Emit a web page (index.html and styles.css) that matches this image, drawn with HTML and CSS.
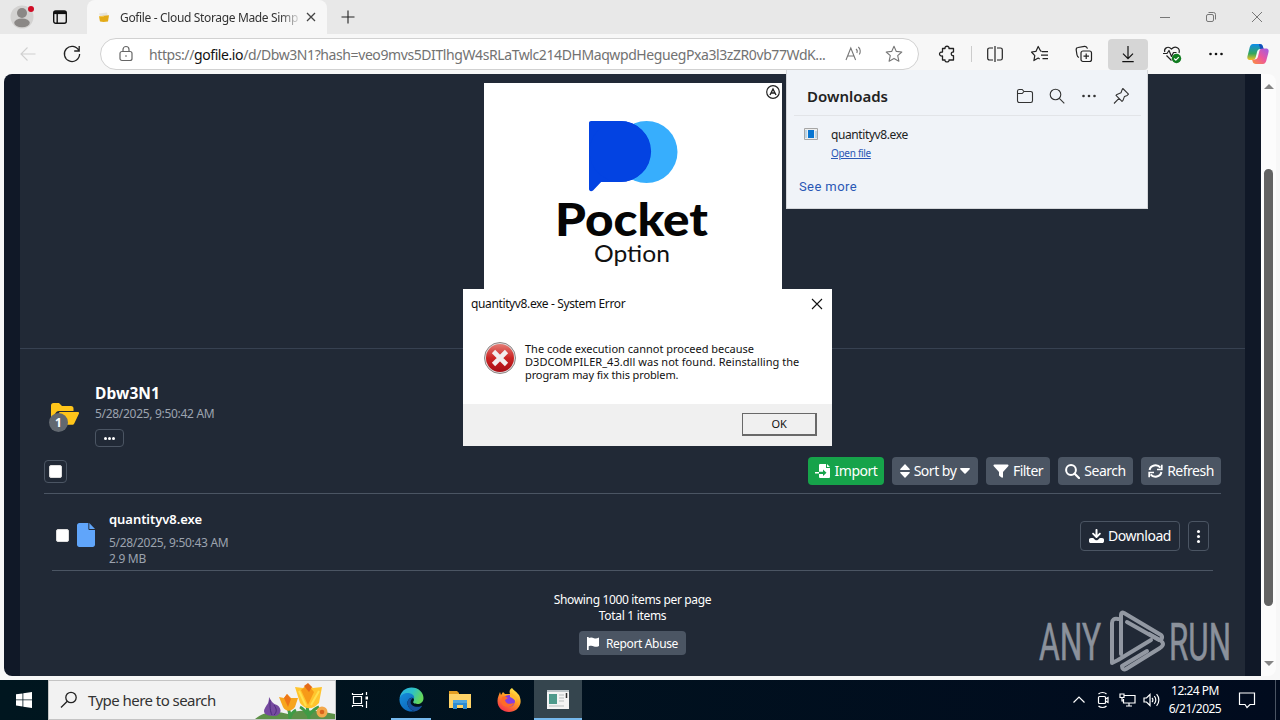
FILE: index.html
```html
<!DOCTYPE html>
<html lang="en">
<head>
    <meta charset="UTF-8">
    <title>Gofile - Cloud Storage Made Simple</title>
    <link rel="stylesheet" href="styles.css">
</head>
<body>
<div class="desktop">
    <div class="tab-strip">
        <div class="profile">
            <svg width="24" height="24" viewBox="0 0 24 24"><circle cx="12" cy="12" r="11.5" fill="#d3d2d1"/><circle cx="12" cy="8" r="5" fill="#8b8886"/><ellipse cx="12" cy="17.8" rx="7.8" ry="4.4" fill="#8b8886"/></svg>
            <span class="profile-dot"></span>
        </div>
        <div class="tab-actions">
            <svg width="16" height="16" viewBox="0 0 16 16" fill="none" stroke="#111" stroke-width="1.4"><rect x="1.7" y="2" width="12.6" height="12.3" rx="2"/><path d="M2 3.6h12" stroke-width="3"/><path d="M5.2 4v10"/></svg>
        </div>
        <div class="tab">
            <svg class="favicon" width="14" height="14" viewBox="0 0 14 14"><path d="M2 3.5l8-1 1 4H3z" fill="#e6e4dd"/><path d="M2 6.2l10-1-1 6.3c-3 .6-6 .6-8 0z" fill="#e3ab19"/><path d="M2 6.4l5-.6v1l-5 .5z" fill="#f6ca51"/></svg>
            <span class="tab-title">Gofile - Cloud Storage Made Simp</span>
            <svg width="16" height="16" viewBox="0 0 16 16" stroke="#444" stroke-width="1.3"><path d="M4 4l8 8M12 4l-8 8"/></svg>
        </div>
        <svg class="new-tab" width="16" height="16" viewBox="0 0 16 16" stroke="#222" stroke-width="1.1"><path d="M8 1.500v13M1.500 8h13"/></svg>
        <div class="window-buttons">
            <svg width="46" height="34" viewBox="0 0 46 34" stroke="#777" fill="none"><path d="M18 17.500h10"/></svg>
            <svg width="46" height="34" viewBox="0 0 46 34" stroke="#777" fill="none"><rect x="18.500" y="14.500" width="7" height="7" rx="1.500"/><path d="M20.500 12.500h5a2 2 0 0 1 2 2v5"/></svg>
            <svg width="46" height="34" viewBox="0 0 46 34" stroke="#777" fill="none"><path d="M18 12l10 10M28 12l-10 10"/></svg>
        </div>
    </div>

    <div class="toolbar">
        <div class="tool"><svg width="20" height="20" viewBox="0 0 20 20" fill="none" stroke="#d0d0d0" stroke-width="1.1"><path d="M17.500 10H3M9.500 3.500L3 10l6.500 6.500"/></svg></div>
        <div class="tool"><svg width="20" height="20" viewBox="0 0 20 20" fill="none" stroke="#222" stroke-width="1.3"><path d="M16.800 6.500A7.600 7.600 0 1 0 17.600 10M17.200 2v5h-5"/></svg></div>
        <div class="address-bar">
            <svg class="lock" width="18" height="18" viewBox="0 0 18 18" fill="none" stroke="#666" stroke-width="1.2"><rect x="3" y="6.500" width="12" height="9" rx="2"/><path d="M6 6.500V4.500a3 3 0 0 1 6 0v2"/><circle cx="9" cy="11" r=".8" fill="#555" stroke="none"/></svg>
            <span class="url">https://<b>gofile.io</b>/d/Dbw3N1?hash=veo9mvs5DITlhgW4sRLaTwlc214DHMaqwpdHeguegPxa3l3zZR0vb77WdK...</span>
            <svg class="read-aloud" width="20" height="20" viewBox="0 0 20 20" fill="none" stroke="#777" stroke-width="1.1"><path d="M2 16L6.800 4l4.800 12M3.600 12h6.400M12 5c1.300 1 1.300 3 .8 4M14.300 3c2.400 2 2.400 5.500 1 7.500"/></svg>
            <svg width="20" height="20" viewBox="0 0 20 20" fill="none" stroke="#777" stroke-width="1.100" stroke-linejoin="round"><path d="M10 2.300l2.300 5.100 5.500.6-4.100 3.700 1.200 5.500L10 14.400l-4.900 2.800 1.200-5.500L2.200 8l5.500-.6z"/></svg>
        </div>
        <div class="tool puzzle"><svg width="20" height="20" viewBox="0 0 20 20" fill="none" stroke="#222" stroke-width="1.300" stroke-linejoin="round"><path d="M5.500 4.500H8c-.5-3 4.500-3 4 0h4.500V8c-3-.4-3 4 0 3.600V16H12c.5 2.500-4.500 2.500-4 0H5.500v-4c-4 .5-4-4.400 0-4z"/></svg></div>
        <div class="tool-divider"></div>
        <div class="tool"><svg width="20" height="20" viewBox="0 0 20 20" fill="none" stroke="#222" stroke-width="1.200"><path d="M8 4H4.500A1.800 1.800 0 0 0 2.700 5.800v8.400A1.800 1.800 0 0 0 4.500 16H8M12 4h3.500a1.800 1.800 0 0 1 1.800 1.800v8.400a1.800 1.800 0 0 1-1.800 1.800H12M10 2v16"/></svg></div>
        <div class="tool fav"><svg width="20" height="20" viewBox="0 0 20 20" fill="none" stroke="#222" stroke-width="1.200" stroke-linejoin="round"><path d="M11.800 7.400L10.600 7 8.200 2.500 5.900 7.400 1.500 8l3.300 3.600-.9 5L8.200 14l1.500.9M12 7.700h6M11 11.200h7M12.500 14.700H18"/></svg></div>
        <div class="tool"><svg width="20" height="20" viewBox="0 0 20 20" fill="none" stroke="#222" stroke-width="1.200"><rect x="7" y="7" width="10.500" height="10.500" rx="2"/><path d="M12.200 9.500v5.500M9.500 12.200H15M5 13.500C3.500 13 3.200 12 3 11L2.200 6C2 4.500 2.600 3.700 4 3.500l6.500-1.100c1.600-.2 2.500.6 3 2.200"/></svg></div>
        <div class="tool active"><svg width="20" height="20" viewBox="0 0 20 20" fill="none" stroke="#111" stroke-width="1.200"><path d="M10 2v12.500M5 9.700l5 5 5-5M4.300 17.700h11.400"/></svg></div>
        <div class="tool"><svg width="20" height="20" viewBox="0 0 20 20" fill="none" stroke="#222" stroke-width="1.200" stroke-linejoin="round"><path d="M2.800 8C1.600 5 5.500 1 9.500 5c4-4 9-.4 7.500 4M4.500 11.500l5 5M1 9.500h4l2-3 2.500 6 2-4h3"/><circle cx="14.500" cy="14.500" r="4.700" fill="#107c20" stroke="none"/><path d="M12.200 14.500l1.600 1.600 3-3" stroke="#fff"/></svg></div>
        <div class="tool"><svg width="20" height="20" viewBox="0 0 20 20" fill="#111"><circle cx="4.500" cy="10" r="1.300"/><circle cx="10" cy="10" r="1.300"/><circle cx="15.500" cy="10" r="1.300"/></svg></div>
        <div class="copilot"><svg width="24" height="24" viewBox="0 0 24 24">
            <defs>
                <linearGradient id="cp1" x1="0" y1="0" x2="0" y2="1"><stop offset="0" stop-color="#0b8cec"/><stop offset=".6" stop-color="#36a65c"/><stop offset="1" stop-color="#f7c324"/></linearGradient>
                <linearGradient id="cp2" x1="1" y1="0" x2="0" y2="1"><stop offset="0" stop-color="#9b5de8"/><stop offset=".5" stop-color="#ed579b"/><stop offset="1" stop-color="#fb913a"/></linearGradient>
            </defs>
            <path d="M7 2h7c2 0 2.500 1 3 3l.5 2h-3c-2 0-3 1-3.500 3l-1.200 5c-.5 2-1.500 3-3.500 3H4c-3 0-3-2.500-2.200-5l2-8C4.500 3 5.500 2 7 2z" fill="url(#cp1)"/>
            <path d="M13 2c2.500 0 3.500 1 4 3l.7 2.200h-3.200L13 3z" fill="#154fb9"/>
            <path d="M17 22h-7c-2 0-3-.8-3.500-3L6 17.500h2.500c2 0 3-1 3.500-3l1.200-5c.5-2 1.500-3 3.500-3H20c3 0 3 2.500 2.200 5l-2 7.500c-.7 2-1.700 3-3.200 3z" fill="url(#cp2)"/>
        </svg></div>
    </div>

    <div class="viewport">
        <div class="page">
            <div class="main">
                <div class="ad-area">
                    <div class="ad">
                        <svg width="298" height="206" viewBox="0 0 298 206">
                            <circle cx="162.500" cy="69" r="31" fill="#37aefd"/>
                            <path d="M107 38h29a30.500 30.500 0 0 1 0 61h-19l-8 8.500c-2 1.500-4 .500-4-1.500V40c0-1.200.8-2 2-2z" transform="translate(105 0) scale(1.01 1) translate(-105 0)" fill="#0343e2"/>
                            <circle cx="136" cy="68.500" r="30.500" fill="#0343e2"/>
                            <text class="ad-name" x="71" y="153" textLength="153" lengthAdjust="spacingAndGlyphs">Pocket</text>
                            <text class="ad-sub" x="110" y="179" textLength="76" lengthAdjust="spacingAndGlyphs">Option</text>
                            <circle cx="289" cy="9" r="6.300" fill="#fff" stroke="#222" stroke-width="1.200"/>
                            <path d="M286 12l3-6 3 6M287 10h4" fill="none" stroke="#222" stroke-width="1.400"/>
                        </svg>
                    </div>
                </div>

                <div class="file-manager">
                    <div class="folder-header">
                        <div class="folder-icon">
                            <svg width="28" height="22" viewBox="0 0 28 22" fill="#ffc51a"><path d="M2.500 0H8l3 3h9a2.500 2.500 0 0 1 2.500 2.500V8H8C6 8 5 9 4 11l-4 7V2.500A2.500 2.500 0 0 1 2.500 0z"/><path d="M8.500 9H27c1 0 1.300.8 1 1.500L23.500 20c-.5 1.300-1.300 1.800-2.500 1.800H2.500z"/></svg>
                            <span class="count-badge">1</span>
                        </div>
                        <div class="folder-info">
                            <div class="folder-name">Dbw3N1</div>
                            <div class="folder-date">5/28/2025, 9:50:42 AM</div>
                            <div class="more-button"><i></i><i></i><i></i></div>
                        </div>
                    </div>

                    <div class="actions">
                        <div class="select-all"><span class="checkbox"></span></div>
                        <div class="button import">
                            <svg width="16" height="14" viewBox="0 0 16 14"><path d="M5.500 0H11v4h4v8.700c0 .8-.5 1.300-1.300 1.300H5.300C4.500 14 4 13.500 4 12.700V10h4v2l3.500-3.200L8 5.500v2.200H4V1.300C4 .5 4.500 0 5.500 0zM12 0l3 3h-3zM0 8h4v1.500H0z"/></svg>
                            <span>Import</span>
                        </div>
                        <div class="button sort">
                            <svg width="10" height="14" viewBox="0 0 10 14"><path d="M5 0l4.700 5c.3.500 0 1-.6 1H.9C.3 6 0 5.500.3 5zM5 14L.3 9c-.3-.5 0-1 .6-1h8.200c.6 0 .9.500.6 1z"/></svg>
                            <span>Sort by</span>
                            <svg width="10" height="6" viewBox="0 0 10 6"><path d="M1 0h8c.9 0 1.200.8.7 1.300L5.600 5.500c-.4.400-.8.400-1.200 0L.3 1.300C-.2.800.1 0 1 0z"/></svg>
                        </div>
                        <div class="button filter">
                            <svg width="16" height="14" viewBox="0 0 16 14"><path d="M1.500.5h13c1 0 1.300 1 .7 1.700L10 8v5c0 .8-.7 1-1.300.6L6.500 12c-.4-.3-.5-.5-.5-1V8L.8 2.200C.2 1.500.5.500 1.500.5z"/></svg>
                            <span>Filter</span>
                        </div>
                        <div class="button search">
                            <svg width="15" height="15" viewBox="0 0 15 15"><circle cx="6" cy="6" r="4.900" fill="none" stroke="#fff" stroke-width="2"/><path d="M9.500 9.500L14 14" stroke="#fff" stroke-width="2.200" stroke-linecap="round"/></svg>
                            <span>Search</span>
                        </div>
                        <div class="button refresh">
                            <svg width="15" height="14" viewBox="0 0 15 14" fill="none" stroke="#fff" stroke-width="2"><path d="M1.600 6a6 5.500 0 0 1 10.800-2.300M13.400 8A6 5.500 0 0 1 2.600 10.300"/><path d="M13.800.8v4.700H9M1.200 13.200V8.500H6" stroke-width="1.700"/></svg>
                            <span>Refresh</span>
                        </div>
                    </div>

                    <div class="file-row">
                        <span class="checkbox"></span>
                        <svg class="file-icon" width="18" height="24" viewBox="0 0 19 24" preserveAspectRatio="none" fill="#60a5fa"><path d="M2.500 0H12v5.500c0 1 .5 1.500 1.500 1.500H19v14.500c0 1.500-1 2.500-2.500 2.500h-14C1 24 0 23 0 21.500v-19C0 1 1 0 2.500 0z"/><path d="M13 0l6 6h-6z"/></svg>
                        <div class="file-info">
                            <div class="file-name">quantityv8.exe</div>
                            <div class="file-meta">5/28/2025, 9:50:43 AM</div>
                            <div class="file-meta">2.9 MB</div>
                        </div>
                        <div class="outline-button download">
                            <svg width="15" height="14" viewBox="0 0 15 14"><path d="M6.500 1c0-1.300 2-1.300 2 0v4.800L10.300 4c1-.8 2 .3 1.300 1.300L8.200 8.700c-.4.400-1 .4-1.400 0L3.400 5.300C2.600 4.300 3.700 3.200 4.700 4l1.800 1.800z"/><path d="M2 9h2.200l1.800 1.700c1 .8 2 .8 3 0L10.800 9H13c1.200 0 2 .8 2 1.700v1.500c0 1-.8 1.800-1.800 1.800H1.800C.8 14 0 13.200 0 12.200v-1.500C0 9.800.8 9 2 9z"/></svg>
                            <span>Download</span>
                        </div>
                        <div class="outline-button kebab"><i></i><i></i><i></i></div>
                    </div>

                    <div class="summary">
                        <div class="per-page">Showing 1000 items per page</div>
                        <div class="total">Total 1 items</div>
                        <div class="report">
                            <svg width="12" height="13" viewBox="0 0 12 13" fill="#fff"><path d="M0 0h1.700v1C4 0 5.500.5 7 1.200c1.500.5 3 .3 5-.6V9C10 10 8.500 10 7 9.500 5.500 8.800 4 8.500 1.700 9.300V13H0z"/></svg>
                            <span>Report Abuse</span>
                        </div>
                    </div>
                </div>
            </div>
        </div>
        <div class="scrollbar">
            <span class="arrow-up"></span>
            <span class="thumb"></span>
            <span class="arrow-down"></span>
        </div>
    </div>

    <div class="taskbar">
        <div class="start"><svg width="16" height="16" viewBox="0 0 16 16" fill="#fff"><path d="M0 2.300l6.500-.9v6.100H0zM7.300 1.300L16 0v7.500H7.300zM0 8.300h6.500v6.200L0 13.600zM7.300 8.300H16V16l-8.700-1.300z"/></svg></div>
        <div class="search-field">
            <svg width="18" height="18" viewBox="0 0 18 18" fill="none" stroke="#222" stroke-width="1.300"><circle cx="11" cy="6.500" r="5.200"/><path d="M7.300 10.200L1 16.500"/></svg>
            <span>Type here to search</span>
            <svg class="flowers" width="80" height="38" viewBox="0 0 80 38">
                <path d="M0 38c8-7 20-9 33-5 12-5 25-4 47 0v5z" fill="#5d9148"/>
                <path d="M19 35c-8 0-12-3-9-8 2-4 4-4 4-11 3 5 4 7 8 8 6 4 4 11-3 11z" fill="#764aa0"/>
                <path d="M15 19c0 7 0 11 2 15M19 24c3 4 3 7 0 10" stroke="#4c2b7c" fill="none"/>
                <path d="M35 38c0-6-1-9-2-12M35 36c2-4 4-6 6-7M54 38c-1-8-2-10-2-16M54 34c4-5 7-7 10-8M53 34c-3-5-6-7-8-8" stroke="#3f9b45" stroke-width="3" fill="none"/>
                <path d="M24 16l5 1 3-4 4 4 7 0-3 9c-4 5-9 5-12 0z" fill="#f7a51e"/>
                <path d="M29 17l3-4 4 5-3 8z" fill="#ee7519"/>
                <path d="M40 6l8 1 5-4 5 4 9-1-3 16c-6 7-14 7-19 0z" fill="#ffc42d"/>
                <path d="M46 9l7-5 6 7-6 13z" fill="#f79a18"/><path d="M49 5l4-3 4 4-3 5z" fill="#e56b19"/>
                <path d="M44 10l7 15M64 10l-8 14" stroke="#ffe04e" stroke-width="2"/>
                <circle cx="67" cy="31" r="5.500" fill="#f3a84a"/><circle cx="67" cy="31" r="2.300" fill="#d9641c"/>
            </svg>
        </div>
        <div class="task"><svg width="18" height="18" viewBox="0 0 18 18" fill="none" stroke="#fff" stroke-width="1.200"><path d="M1.500 2v1.500h10V2M1.500 16v-1.500h10V16M2.500 5.500h8v7h-8zM15.500 1v3M15.500 10v7"/><rect x="14.500" y="5.500" width="2.500" height="3" fill="#fff" stroke="none"/></svg></div>
        <div class="task edge"><svg width="25" height="25" viewBox="0 0 25 25">
            <defs>
                <linearGradient id="e1" x1="0" y1="0" x2="1" y2=".4"><stop offset="0" stop-color="#29aee6"/><stop offset=".55" stop-color="#2dc1c7"/><stop offset="1" stop-color="#64d75b"/></linearGradient>
                <linearGradient id="e2" x1="0" y1="0" x2=".7" y2="1"><stop offset="0" stop-color="#168fdc"/><stop offset="1" stop-color="#0c64b8"/></linearGradient>
            </defs>
            <path d="M.6 11C1.500 4.500 6.500.4 12.500.4c7 0 12 5 12 10.500 0 4-3 6-6 6-3.500 0-5-1.200-4-2.600 1.500-2-.5-5.800-4.500-5.800C5 8.500 1 10.500.6 11z" fill="url(#e1)"/>
            <path d="M.5 12C1 8.500 4.500 6 8.500 6c4.500 0 7.500 3 6.500 5.500-2-2-6.500 0-6.500 4.500 0 5 5 8.500 8.500 8C8.500 26.500 0 20.500.5 12z" fill="url(#e2)"/>
            <path d="M14 11c-2.500-.5-5.500 1.300-5.500 5 0 5.500 6 9 9.500 7.800 2-1 3.700-2.500 4.800-4.300.3-.6-.2-.8-.7-.6-5 2.300-10.500-.4-10.500-3.700 0-2 1-3.300 2.400-4.200z" fill="#17519d"/>
        </svg></div>
        <div class="task explorer"><svg width="22" height="20" viewBox="0 0 22 20"><path d="M0 1h8l2 2v3H0z" fill="#e49f22"/><path d="M0 4h22v14H0z" fill="#ffd367"/><path d="M4 10h14v9h-4v-4H8v4H4z" fill="#2d8bd2"/><path d="M4 10h14v3H4z" fill="#50a6df"/></svg></div>
        <div class="task firefox"><svg width="24" height="25" viewBox="0 0 24 25">
            <defs><linearGradient id="ff" x1=".8" y1="0" x2=".2" y2="1"><stop offset="0" stop-color="#fff04b"/><stop offset=".45" stop-color="#ff9a22"/><stop offset="1" stop-color="#f5294e"/></linearGradient></defs>
            <path d="M3 4l1 3 2-3 2 2 5 0c-1-3 0-5 2-6 2 3 4 3 6 6l1 1c1 2 2 5 1.500 8C22.500 20 18 24 12 24S.5 20 .5 13C.5 9 2 7 3 4z" fill="url(#ff)"/>
            <circle cx="12" cy="13" r="6" fill="#843ee0"/><path d="M5 9c3-1 4 0 6 1l-3 2c1 5 6 4 9 3-2 6-13 5-13-2z" fill="#ff6b27"/>
            <path d="M13 5c4 1 7 4 6 9-1-2-3-4-6-5z" fill="#ffb82b"/>
        </svg></div>
        <div class="task app"><svg width="22" height="19" viewBox="0 0 22 19"><path d="M0 0h22v19H0z" fill="#f4f4f4"/><path d="M0 0h22v2H0z" fill="#bcc5c9"/><path d="M2 4h8v10H2z" fill="#4e9a8c"/><path d="M12 5h5M12 8h5M12 11h5M2 16h15" stroke="#b7bdbd"/><path d="M19.500 3v5" stroke="#333" stroke-width="1.500"/></svg></div>
        <div class="tray">
            <div class="tray-icon"><svg width="16" height="16" viewBox="0 0 16 16" fill="none" stroke="#fff" stroke-width="1.200"><path d="M2.500 10.500L8 5l5.500 5.500"/></svg></div>
            <div class="tray-icon"><svg width="16" height="18" viewBox="0 0 16 18" fill="none" stroke="#fff" stroke-width="1.200"><rect x="3.500" y="5.500" width="7" height="7" rx="1"/><path d="M10.500 8l2.500-1.500v5L10.500 10M3.500 3c2-2 6-2 8 0M3.500 15c2 2 6 2 8 0"/></svg></div>
            <div class="tray-icon"><svg width="17" height="16" viewBox="0 0 17 16" fill="none" stroke="#fff" stroke-width="1.200"><path d="M5.500 3.500H16v7.500H4.500V7M7 14h6M10 11v3M1 2h4v3.500H1zM3 5.500V9h1.500"/></svg></div>
            <div class="tray-icon"><svg width="17" height="16" viewBox="0 0 17 16" fill="none" stroke="#fff" stroke-width="1.200"><path d="M1 6h2.500L7 2.500v11L3.500 10H1zM9 6c1.200 1 1.200 3 0 4M11.300 4.200c2 2 2 5.600 0 7.600M13.600 2.200c3 3.400 3 8.200 0 11.600"/></svg></div>
            <div class="clock"><span class="time">12:24 PM</span><span class="date">6/21/2025</span></div>
            <div class="notifications"><svg width="18" height="18" viewBox="0 0 18 18" fill="none" stroke="#fff" stroke-width="1.200"><path d="M1.500 2h15v11.500h-4.500L9 16.500l-2-3H1.500z"/></svg></div>
            <div class="show-desktop"></div>
        </div>
    </div>

    <div class="downloads-popup">
        <div class="downloads-header">
            <span class="downloads-title">Downloads</span>
            <svg width="18" height="18" viewBox="0 0 18 18" fill="none" stroke="#333" stroke-width="1.100"><path d="M1.500 4A1.700 1.700 0 0 1 3.200 2.500h3L8 4.500h6.800a1.700 1.700 0 0 1 1.700 1.700v7.600a1.700 1.700 0 0 1-1.700 1.700H3.200a1.700 1.700 0 0 1-1.700-1.700zM1.500 6.500h4.700l1.800-2"/></svg>
            <svg width="18" height="18" viewBox="0 0 18 18" fill="none" stroke="#333" stroke-width="1.100"><circle cx="7.500" cy="7.500" r="5.300"/><path d="M11.300 11.300l5 5"/></svg>
            <svg width="18" height="18" viewBox="0 0 18 18" fill="#333"><circle cx="3.500" cy="9" r="1.300"/><circle cx="9" cy="9" r="1.300"/><circle cx="14.500" cy="9" r="1.300"/></svg>
            <svg width="18" height="18" viewBox="0 0 18 18" fill="none" stroke="#333" stroke-width="1.100" stroke-linejoin="round"><path d="M10.800 1.500l5.700 5.700-1.300 1.200-2.700 1-1.500 4-1 1-6-6 1-1 4-1.600 1-2.800zM7 11.400L2 16.500"/></svg>
        </div>
        <div class="downloads-item">
            <svg width="14" height="12" viewBox="0 0 14 12"><path d="M.5.500h13v11H.5z" fill="#eee" stroke="#a6a6a6"/><path d="M4 2h6v8H4z" fill="#0875d1"/><path d="M1 2h2v8H1zM11 3h2v7h-2z" fill="#bcd5e6"/></svg>
            <div>
                <div class="downloads-name">quantityv8.exe</div>
                <div class="open-file">Open file</div>
            </div>
        </div>
        <div class="see-more">See more</div>
    </div>

    <div class="dialog">
        <div class="dialog-title">
            <span>quantityv8.exe - System Error</span>
            <svg width="12" height="12" viewBox="0 0 12 12" stroke="#111" stroke-width="1.100"><path d="M1 1l10 10M11 1L1 11"/></svg>
        </div>
        <div class="dialog-body">
            <svg width="32" height="32" viewBox="0 0 32 32">
                <defs><linearGradient id="err" x1="0" y1="0" x2="0" y2="1"><stop offset="0" stop-color="#e47b74"/><stop offset=".5" stop-color="#cb2423"/><stop offset="1" stop-color="#a80e15"/></linearGradient></defs>
                <circle cx="16" cy="16" r="15.500" fill="#e0dcdc" stroke="#8e8585"/><circle cx="16" cy="16" r="14" fill="url(#err)"/>
                <path d="M9.500 9.500l13 13M22.500 9.500l-13 13" stroke="#f2eeee" stroke-width="4.600"/>
            </svg>
            <div class="dialog-text">
                <div class="line-one">The code execution cannot proceed because</div>
                <div class="line-two">D3DCOMPILER_43.dll was not found. Reinstalling the</div>
                <div class="line-three">program may fix this problem.</div>
            </div>
        </div>
        <div class="dialog-footer"><div class="ok">OK</div></div>
    </div>

    <svg class="watermark" width="200" height="64" viewBox="0 0 200 64">
        <text x="1" y="51" textLength="62" lengthAdjust="spacingAndGlyphs">ANY</text>
        <text x="131" y="51" textLength="62" lengthAdjust="spacingAndGlyphs">RUN</text>
        <g fill="none" stroke="#9298a2" stroke-width="4" stroke-linejoin="round" stroke-linecap="round">
            <path d="M80 10c-4-1-6 1-6 4v40l6-3 33-20M83 45V6c0-2 1-3 3-2l37 22c2 2 1 5-2 5L89 13"/>
            <path d="M111 25l11 6c4 3 4 5 0 8L88 60c-2 1-4 0-4-3l25-15"/>
        </g>
    </svg>
</div>
</body>
</html>
```
FILE: styles.css
```css
body {
    margin: 0;
    font-family: "Noto Sans", "Open Sans", sans-serif;
    color: #fff;
}
svg {
    display: block;
    flex-shrink: 0;
}
.desktop {
    position: relative;
    width: 1280px;
    height: 720px;
    overflow: hidden;
    display: flex;
    flex-direction: column;
    background: #f7f7f7;
    white-space: nowrap;
}

/* browser chrome */
.tab-strip {
    height: 34px;
    display: flex;
    align-items: center;
    background: #e8e8e8;
    color: #333;
}
.profile {
    position: relative;
    margin-left: 10px;
}
.profile-dot {
    position: absolute;
    top: 1px;
    right: 0;
    width: 6px;
    height: 6px;
    border-radius: 50%;
    background: #d00d26;
}
.tab-actions {
    margin-left: 18px;
}
.tab {
    width: 240px;
    height: 34px;
    box-sizing: border-box;
    margin-left: 19px;
    padding: 0 8px 0 10px;
    border-radius: 8px 8px 0 0;
    display: flex;
    align-items: center;
    background: #f7f7f7;
}
.tab-title {
    width: 178px;
    margin-left: 9px;
    margin-right: 5px;
    font-size: 12px;
    letter-spacing: -0.35px;
    -webkit-mask-image: linear-gradient(90deg, #000 160px, transparent 182px);
    mask-image: linear-gradient(90deg, #000 160px, transparent 182px);
}
.new-tab {
    margin-left: 13px;
}
.window-buttons {
    display: flex;
    margin-left: auto;
}
.toolbar {
    height: 40px;
    box-sizing: border-box;
    padding-left: 8px;
    display: flex;
    align-items: center;
}
.tool {
    width: 40px;
    height: 31px;
    margin-right: 4px;
    flex-shrink: 0;
    display: flex;
    align-items: center;
    justify-content: center;
    border-radius: 4px;
}
.tool.active {
    background: #d6d6d6;
}
.tool.puzzle {
    margin-left: 9px;
}
.tool.fav {
    margin-left: 1px;
}
.tool-divider {
    width: 1px;
    height: 16px;
    margin-right: 3px;
    flex-shrink: 0;
    background: #ccc;
}
.copilot {
    margin-left: 6px;
}
.address-bar {
    width: 819px;
    height: 32px;
    box-sizing: border-box;
    flex-shrink: 0;
    margin-left: 4px;
    margin-right: -1px;
    padding: 0 14px 0 16px;
    border: 1px solid #d1d1d1;
    border-radius: 16px;
    display: flex;
    align-items: center;
    background: #fff;
}
.url {
    width: 680px;
    margin-left: 14px;
    font-size: 14px;
    letter-spacing: -0.41px;
    color: #727272;
}
.url b {
    font-weight: normal;
    color: #111;
}
.read-aloud {
    margin-left: 16px;
    margin-right: 20px;
}

/* gofile page */
.viewport {
    height: 602px;
    margin: 0 4px;
    display: flex;
    border-radius: 8px;
    overflow: hidden;
}
.page {
    width: 1257px;
    display: flex;
    justify-content: center;
    background: #101827;
}
.main {
    width: 1225px;
    background: #212936;
}
.ad-area {
    height: 274px;
    box-sizing: content-box;
    display: flex;
    justify-content: center;
    border-bottom: 1px solid #374151;
}
.ad {
    width: 298px;
    height: 250px;
    margin-top: 9px;
    background: #fff;
}
.ad-name {
    font: 900 45px Lato, sans-serif;
    fill: #050505;
}
.ad-sub {
    font: 24px Lato, sans-serif;
    fill: #111;
}
.file-manager {
    padding: 0 24px;
}
.folder-header {
    height: 108px;
    display: flex;
}
.folder-icon {
    position: relative;
    margin: 54px 16px 0 7px;
}
.count-badge {
    position: absolute;
    left: -2px;
    top: 10px;
    width: 19px;
    height: 19px;
    border-radius: 50%;
    background: #626870;
    font-size: 12px;
    font-weight: 700;
    line-height: 19px;
    text-align: center;
}
.folder-info {
    padding-top: 33px;
}
.folder-name {
    margin-bottom: 1px;
    font-size: 15.5px;
    font-weight: 700;
    line-height: 22px;
    letter-spacing: 0.1px;
}
.folder-date {
    font-size: 12px;
    line-height: 18px;
    letter-spacing: -0.3px;
    color: #9ca3af;
}
.more-button {
    width: 27px;
    height: 16px;
    margin-top: 6px;
    border: 1px solid #4b5563;
    border-radius: 4px;
    display: flex;
    align-items: center;
    justify-content: center;
    gap: 1px;
}
.more-button i,
.kebab i {
    width: 3px;
    height: 3px;
    border-radius: 50%;
    background: #fff;
}
.actions {
    height: 36px;
    display: flex;
    gap: 8px;
    border-bottom: 1px solid #4b5563;
}
.select-all {
    width: 21px;
    height: 21px;
    margin-top: 3px;
    margin-right: auto;
    border: 1px solid #4b5563;
    border-radius: 4px;
    display: flex;
    align-items: center;
    justify-content: center;
}
.checkbox {
    width: 11px;
    height: 11px;
    border: 1px solid #ddd;
    border-radius: 2px;
    background: #fff;
}
.button {
    height: 28px;
    display: flex;
    align-items: center;
    justify-content: center;
    gap: 4px;
    border-radius: 4px;
    background: #4b5563;
    font-size: 14px;
    line-height: 18px;
    letter-spacing: -0.5px;
    fill: #fff;
}
.button span {
    margin-bottom: 1px;
}
.import {
    width: 76px;
    background: #16a34a;
}
.sort {
    width: 86px;
}
.filter {
    width: 64px;
}
.search {
    width: 75px;
}
.refresh {
    width: 80px;
}
.file-row {
    height: 76px;
    margin: 0 8px;
    padding: 0 4px;
    display: flex;
    align-items: center;
    border-bottom: 1px solid #4b5563;
}
.file-row .checkbox {
    margin-top: 6px;
}
.file-icon {
    margin: 5px 14px 0 8px;
}
.file-info {
    padding-top: 13px;
    margin-right: auto;
}
.file-name {
    margin-bottom: 7px;
    font-size: 13px;
    font-weight: 600;
    line-height: 18px;
    letter-spacing: -0.05px;
}
.file-meta {
    font-size: 12px;
    line-height: 16px;
    letter-spacing: -0.3px;
    color: #9ca3af;
}
.outline-button {
    height: 28px;
    margin-top: 8px;
    border: 1px solid #4b5563;
    border-radius: 4px;
    display: flex;
    align-items: center;
    justify-content: center;
    gap: 4px;
    font-size: 14px;
    line-height: 18px;
    letter-spacing: -0.45px;
    fill: #fff;
}
.outline-button span {
    margin-bottom: 1px;
}
.download {
    width: 98px;
    margin-right: 8px;
}
.kebab {
    width: 19px;
    flex-direction: column;
    gap: 2px;
}
.summary {
    padding-top: 21px;
    display: flex;
    flex-direction: column;
    align-items: center;
    font-size: 12px;
    line-height: 16px;
    letter-spacing: -0.35px;
}
.total {
    letter-spacing: -0.3px;
}
.report {
    width: 107px;
    height: 24px;
    margin-top: 7px;
    border-radius: 4px;
    display: flex;
    align-items: center;
    justify-content: center;
    gap: 7px;
    background: #4b5563;
}
.report span {
    margin-top: 1px;
}
.scrollbar {
    width: 15px;
    display: flex;
    flex-direction: column;
    align-items: center;
    background: #fcfcfc;
}
.arrow-up,
.arrow-down {
    border: 5px solid transparent;
}
.arrow-up {
    margin-top: 10px;
    border-top-width: 0;
    border-bottom-color: #858585;
    margin-bottom: 80px;
}
.thumb {
    width: 9px;
    height: 437px;
    border-radius: 5px;
    background: #636363;
}
.arrow-down {
    margin-top: 55px;
    border-bottom-width: 0;
    border-top-color: #858585;
}

/* taskbar */
.taskbar {
    height: 40px;
    margin-top: 4px;
    display: flex;
    background: linear-gradient(90deg, #00161f, #010b1e);
}
.start,
.task {
    width: 48px;
    height: 40px;
    display: flex;
    align-items: center;
    justify-content: center;
}
.search-field {
    width: 288px;
    height: 40px;
    box-sizing: border-box;
    padding-left: 11px;
    border: 1px solid #c4c4c4;
    display: flex;
    align-items: center;
    background: #f2f2f2;
    color: #333;
    font-size: 15px;
    letter-spacing: -0.55px;
}
.search-field span {
    margin-left: 10px;
}
.flowers {
    margin-left: auto;
}
.task.edge,
.task.app {
    box-sizing: border-box;
    border-bottom: 2px solid #76b9ed;
}
.task.edge {
    width: 40px;
    margin: 0 5px 0 7px;
}
.task.explorer {
    margin-right: 1px;
}
.task.firefox {
    margin-right: 1px;
}
.task.app {
    background: #35454e;
}
.tray {
    margin-left: auto;
    display: flex;
    align-items: center;
}
.tray-icon {
    width: 24px;
    display: flex;
    justify-content: center;
}
.clock {
    width: 64px;
    display: flex;
    flex-direction: column;
    align-items: center;
    font-size: 12px;
    line-height: 18px;
    letter-spacing: -0.5px;
}
.notifications {
    width: 40px;
    display: flex;
    justify-content: center;
}
.show-desktop {
    width: 4px;
    height: 40px;
    margin-left: 8px;
    border-left: 1px solid #4a5463;
}

/* windows above the page */
.downloads-popup {
    position: absolute;
    left: 786px;
    top: 70px;
    width: 360px;
    height: 138px;
    border: 1px solid #d4d6da;
    border-top: 0;
    background: #f0f3f8;
    color: #222;
}
.downloads-header {
    height: 46px;
    margin: 0 6px 0 7px;
    padding: 6px 11px 0 13px;
    box-sizing: border-box;
    display: flex;
    align-items: center;
    gap: 14px;
    border-bottom: 1px solid #e2e4e8;
}
.downloads-title {
    margin-right: auto;
    font-size: 15px;
    font-weight: 600;
}
.downloads-item {
    display: flex;
    gap: 13px;
    padding: 12px 0 0 17px;
}
.downloads-name {
    margin-top: -2px;
    font-size: 12px;
    line-height: 18px;
    letter-spacing: -0.4px;
}
.open-file {
    margin-top: 1px;
    font-size: 10px;
    line-height: 16px;
    letter-spacing: -0.3px;
    text-decoration: underline;
    color: #2a57b5;
}
.see-more {
    margin: 17px 0 0 12px;
    font-family: Roboto, "Liberation Sans", sans-serif;
    font-size: 13px;
    line-height: 18px;
    letter-spacing: 0.4px;
    color: #2a57b5;
}
.dialog {
    position: absolute;
    left: 463px;
    top: 289px;
    width: 369px;
    height: 157px;
    display: flex;
    flex-direction: column;
    background: #fff;
    color: #111;
}
.dialog-title {
    height: 29px;
    padding: 0 9px 0 8px;
    display: flex;
    align-items: center;
    justify-content: space-between;
    font-size: 12px;
    letter-spacing: -0.37px;
}
.dialog-body {
    height: 86px;
    padding-left: 21px;
    display: flex;
    align-items: flex-start;
    gap: 9px;
}
.dialog-body svg {
    margin-top: 24px;
}
.dialog-text {
    margin-top: 24px;
    font-size: 11px;
    line-height: 13px;
}
.line-two {
    letter-spacing: 0.04px;
}
.line-three {
    letter-spacing: -0.12px;
}
.dialog-footer {
    height: 42px;
    padding-right: 15px;
    display: flex;
    align-items: center;
    justify-content: flex-end;
    background: #f0f0f0;
}
.ok {
    width: 72px;
    height: 20px;
    margin-top: -2px;
    border: 1px solid #696969;
    border-right-width: 2px;
    border-bottom-width: 2px;
    background: #f0f0f0;
    font-size: 11px;
    line-height: 19px;
    letter-spacing: -0.3px;
    text-align: center;
}
.watermark {
    position: absolute;
    left: 1038px;
    top: 609px;
}
.watermark text {
    font: 52px Roboto, sans-serif;
    fill: #8b919b;
    stroke: #8b919b;
    stroke-width: 0.6px;
}
```
